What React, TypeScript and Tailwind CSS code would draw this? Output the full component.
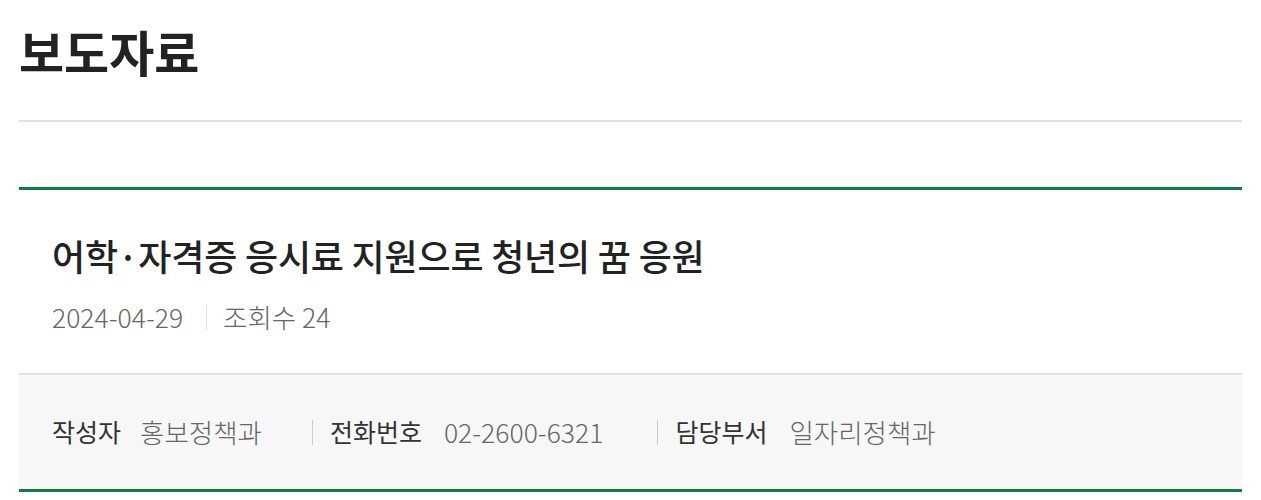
const FONT = "font-['Noto_Sans_CJK_KR','Noto_Sans',sans-serif]";

function InfoItem({ label, value, first }: { label: string; value: string; first?: boolean }) {
  return (
    <li className={`flex items-center ${first ? "pr-[50px]" : "border-l border-[#cccccc] pl-[17px] pr-[54px]"} h-[25px]`}>
      <span className="text-[25px] text-[#333333]">{label}</span>
      <span className={`${first ? "ml-[19px]" : "ml-[22px]"} text-[26.5px] font-light text-[#666666]`}>{value}</span>
    </li>
  );
}

export default function App() {
  return (
    <div className={`${FONT} w-[1261px] h-[500px] bg-white px-[19px] pt-[19px] overflow-hidden`}>
      <h1 className="text-[49px] font-bold leading-[64px] text-[#222222]">보도자료</h1>
      <div className="mt-[37px] h-[2px] bg-[#e0e0e0]" />

      <div className="mt-[65px] border-t-[3px] border-[#127a45]">
        <div className="px-[33px] pt-[43px] pb-[40px]">
          <h2 className="text-[36px] font-medium leading-[44px] text-[#222222] tracking-[-0.2px]">
            어학·자격증 응시료 지원으로 청년의 꿈 응원
          </h2>
          <div className="mt-[24px] flex items-center text-[26.5px] font-light leading-[32px] text-[#666666]">
            <span>2024-04-29</span>
            <span className="ml-[23px] mr-[16px] h-[25px] w-px bg-[#dddddd]" />
            <span>조회수 24</span>
          </div>
        </div>

        <div className="border-t-2 border-[#e2e2e2] bg-[#f7f7f7] border-b-[3px] border-b-[#127a45]">
          <ul className="flex items-center px-[33px] h-[114px]">
            <InfoItem first label="작성자" value="홍보정책과" />
            <InfoItem label="전화번호" value="02-2600-6321" />
            <InfoItem label="담당부서" value="일자리정책과" />
          </ul>
        </div>
      </div>
    </div>
  );
}
